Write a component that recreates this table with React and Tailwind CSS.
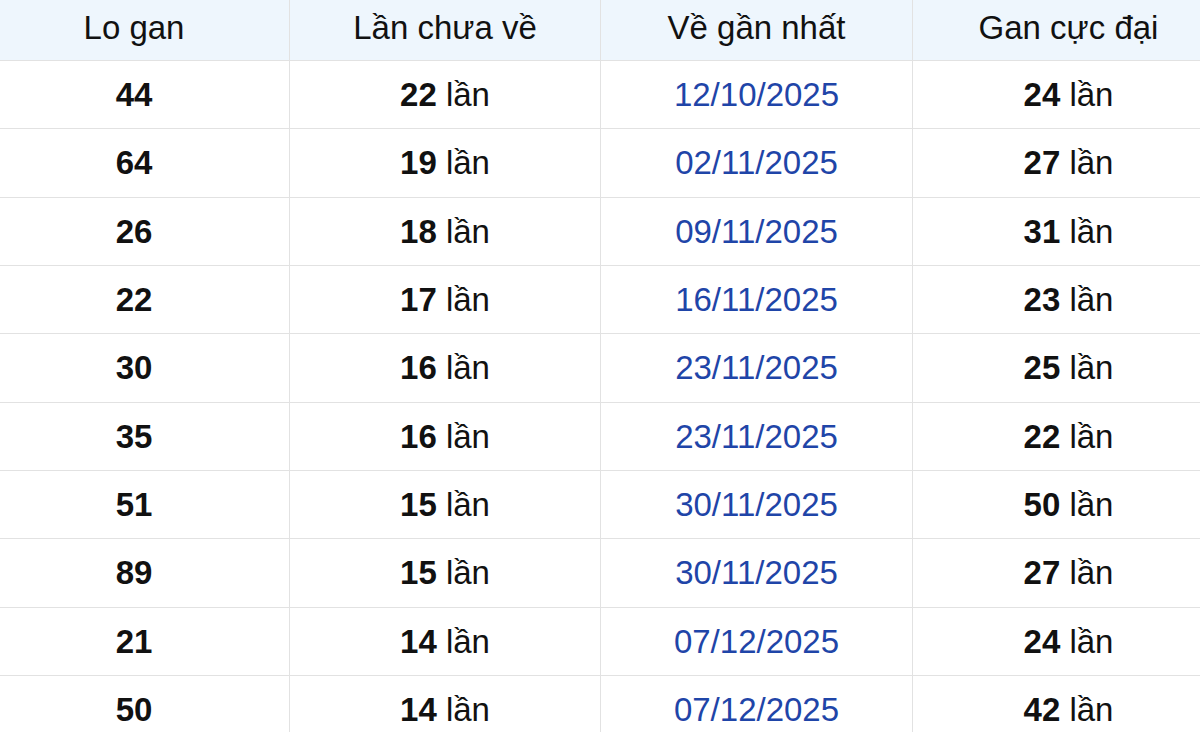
const rows = [
    ["44", "22", "12/10/2025", "24"],
    ["64", "19", "02/11/2025", "27"],
    ["26", "18", "09/11/2025", "31"],
    ["22", "17", "16/11/2025", "23"],
    ["30", "16", "23/11/2025", "25"],
    ["35", "16", "23/11/2025", "22"],
    ["51", "15", "30/11/2025", "50"],
    ["89", "15", "30/11/2025", "27"],
    ["21", "14", "07/12/2025", "24"],
    ["50", "14", "07/12/2025", "42"],
];

const headers = ["Lo gan", "Lần chưa về", "Về gần nhất", "Gan cực đại"];

const cell = "flex items-center justify-center border-b border-r border-[#e2e2e2]";

export default function App() {
    return (
        <div className="w-[1200px] h-[732px] overflow-hidden bg-white text-[33px] text-[#111] font-['Liberation_Sans',Arial,sans-serif]">
            {/* bảng bị cắt hai bên như ảnh chụp */}
            <div className="ml-[-21px] w-[1246px] grid grid-cols-[311px_311px_312px_312px]">
                {headers.map((h) => (
                    <div key={h} className={`${cell} h-[61px] bg-[#eef6fd] pb-[4px]`}>
                        {h}
                    </div>
                ))}
                {rows.map((r, i) => (
                    <div key={i} className="contents">
                        <div className={`${cell} h-[68.33px] font-bold`}>{r[0]}</div>
                        <div className={`${cell} h-[68.33px]`}>
                            <b>{r[1]}</b>&nbsp;lần
                        </div>
                        <div className={`${cell} h-[68.33px] text-[#1f45a8]`}>{r[2]}</div>
                        <div className={`${cell} h-[68.33px]`}>
                            <b>{r[3]}</b>&nbsp;lần
                        </div>
                    </div>
                ))}
            </div>
        </div>
    );
}
